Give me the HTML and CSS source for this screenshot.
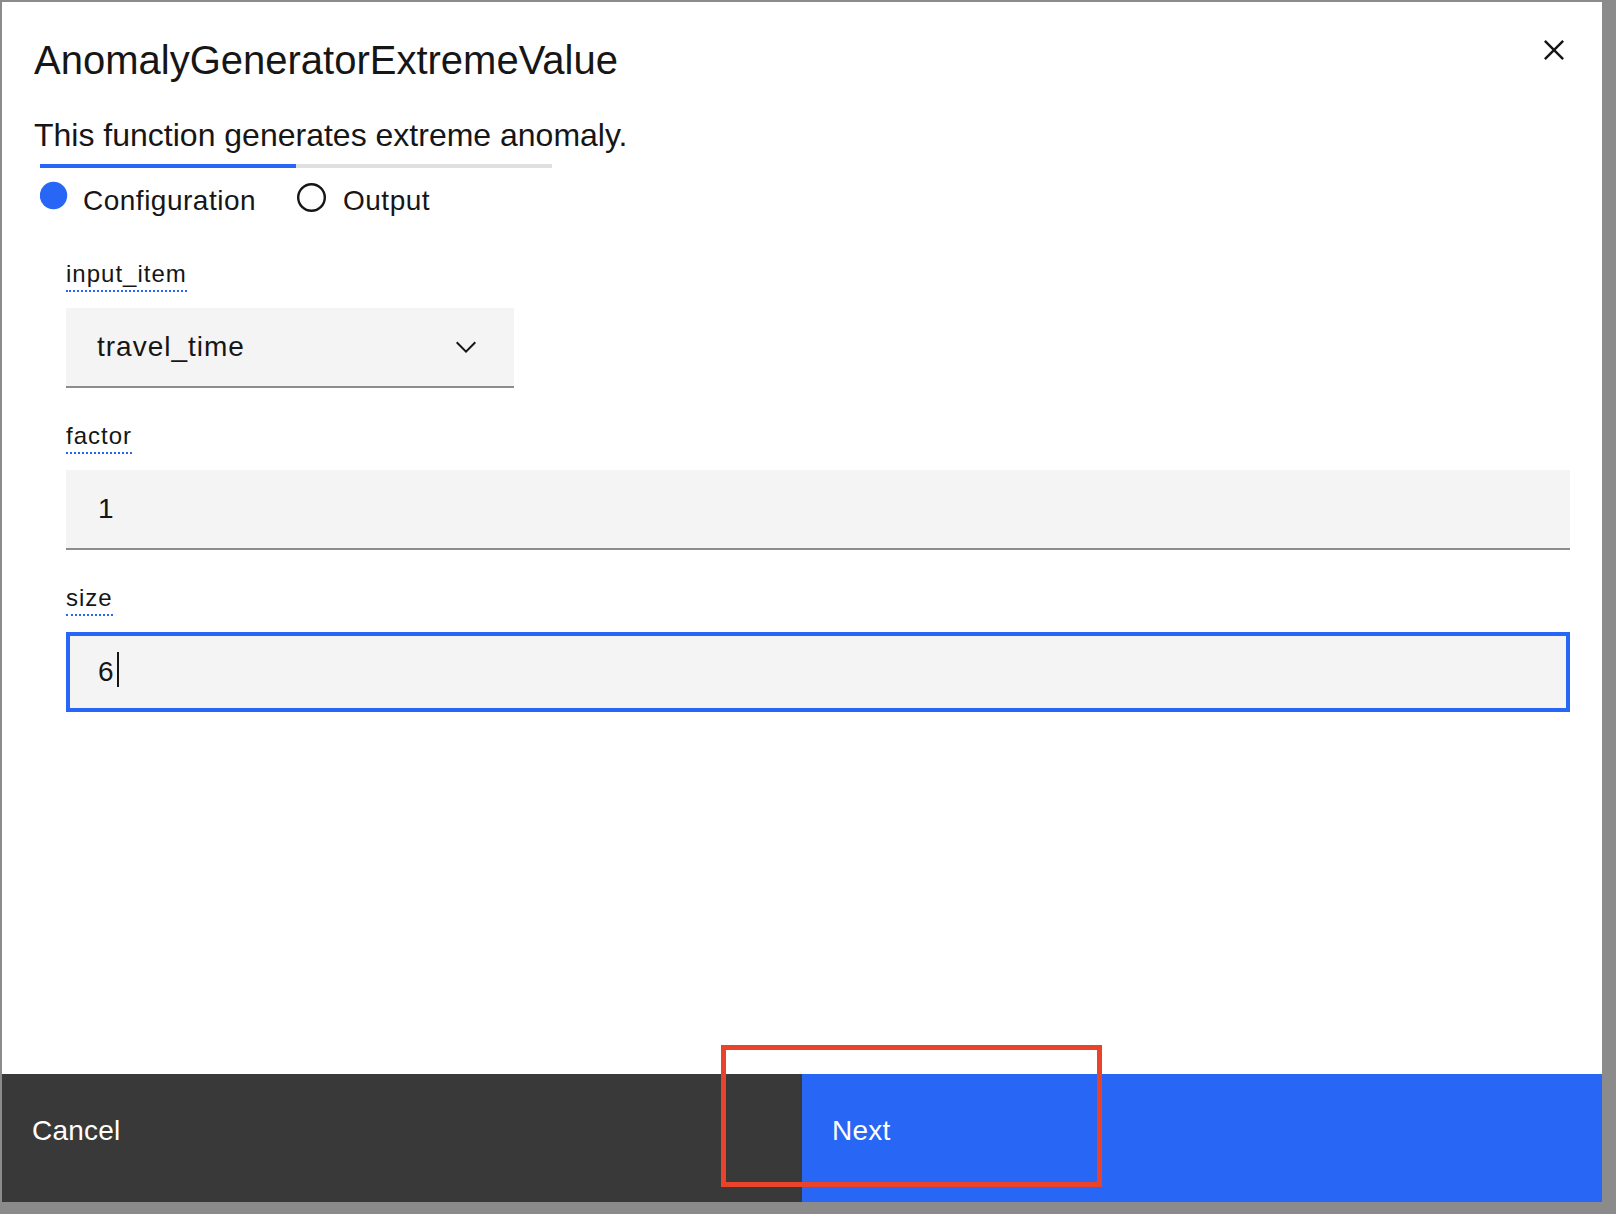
FILE: index.html
```html
<!DOCTYPE html>
<html lang="en">
<head>
<meta charset="utf-8">
<title>AnomalyGeneratorExtremeValue</title>
<link rel="stylesheet" href="styles.css">
</head>
<body>
  <div class="modal">
    <header class="modal-header">
      <div class="heading">
        <h2 class="title">AnomalyGeneratorExtremeValue</h2>
        <p class="desc">This function generates extreme anomaly.</p>
      </div>
      <button class="close" aria-label="Close">
        <svg width="40" height="40" viewBox="0 0 32 32" aria-hidden="true"><path d="M24 9.4L22.6 8 16 14.6 9.4 8 8 9.4 14.6 16 8 22.6 9.4 24 16 17.4 22.6 24 24 22.6 17.4 16 24 9.4z" fill="#161616"/></svg>
      </button>
    </header>

    <ol class="progress">
      <li class="step step-current">
        <svg class="step-icon" width="32" height="32" viewBox="0 0 32 32" aria-hidden="true"><circle cx="13.5" cy="15.5" r="13.7" fill="#2866f5"/></svg>
        <span class="step-label">Configuration</span>
      </li>
      <li class="step step-next">
        <svg class="step-icon" width="32" height="32" viewBox="0 0 32 32" aria-hidden="true"><circle cx="15.5" cy="17.5" r="13.3" fill="none" stroke="#161616" stroke-width="2.4"/></svg>
        <span class="step-label">Output</span>
      </li>
    </ol>

    <div class="form">
      <div class="field">
        <span class="field-label">input_item</span>
        <div class="select">
          <span class="value value-select">travel_time</span>
          <svg width="32" height="32" viewBox="0 0 16 16" aria-hidden="true"><path d="M8 11L3 6 3.7 5.3 8 9.6 12.3 5.3 13 6z" fill="#161616"/></svg>
        </div>
      </div>
      <div class="field">
        <span class="field-label">factor</span>
        <div class="text-input"><span class="value">1</span></div>
      </div>
      <div class="field">
        <span class="field-label">size</span>
        <div class="text-input text-input-focus"><span class="value">6</span><span class="caret"></span></div>
      </div>
    </div>

    <footer class="modal-footer">
      <button class="btn btn-secondary">Cancel</button>
      <button class="btn btn-primary">Next</button>
    </footer>
  </div>
  <div class="annotation"></div>
</body>
</html>
```

FILE: styles.css
```css
html {
  background: #8b8b8b;
}
body {
  margin: 0;
  padding: 2px 0 0 2px;
  width: 1614px;
  height: 1212px;
  position: relative;
  font-family: "Liberation Sans", Arial, sans-serif;
  color: #161616;
}
.modal {
  width: 1600px;
  height: 1200px;
  background: #ffffff;
  display: flex;
  flex-direction: column;
}
.modal-header {
  display: flex;
  padding-left: 32px;
}
.heading {
  flex: 1;
  padding-top: 34px;
}
.title {
  margin: 0;
  font-size: 40px;
  line-height: 48px;
  font-weight: 400;
}
.desc {
  margin: 31px 0 0;
  font-size: 32px;
  line-height: 40px;
}
.close {
  width: 96px;
  height: 96px;
  flex-shrink: 0;
  border: 0;
  padding: 0;
  background: transparent;
  display: flex;
  align-items: center;
  justify-content: center;
}
.progress {
  list-style: none;
  margin: 9px 0 0;
  padding: 0 0 0 38px;
  display: flex;
}
.step {
  width: 256px;
  border-top: 4px solid #e0e0e0;
  padding-top: 12px;
  display: flex;
  align-items: flex-start;
}
.step-current {
  border-top-color: #2866f5;
}
.step-icon {
  flex-shrink: 0;
  display: block;
}
.step-label {
  font-size: 28px;
  line-height: 36px;
  letter-spacing: 0.5px;
  padding-top: 3px;
  margin-left: 15px;
}
.step-current .step-label {
  margin-left: 11px;
}
.form {
  padding: 39px 32px 0 64px;
  display: flex;
  flex-direction: column;
  gap: 32px;
}
.field {
  display: flex;
  flex-direction: column;
  align-items: flex-start;
  gap: 16px;
}
.field-label {
  font-size: 24px;
  line-height: 32px;
  letter-spacing: 1px;
  border-bottom: 2px dotted #2866f5;
}
.select {
  box-sizing: border-box;
  width: 448px;
  height: 80px;
  background: #f4f4f4;
  border-bottom: 2px solid #8d8d8d;
  padding: 0 32px 0 31px;
  display: flex;
  align-items: center;
  justify-content: space-between;
}
.value {
  font-size: 28px;
  line-height: 36px;
  letter-spacing: 0.32px;
}
.value-select {
  letter-spacing: 1px;
}
.select svg {
  display: block;
}
.text-input {
  box-sizing: border-box;
  align-self: stretch;
  height: 80px;
  background: #f4f4f4;
  border-bottom: 2px solid #8d8d8d;
  padding: 0 32px;
  display: flex;
  align-items: center;
}
.text-input-focus {
  border: 4px solid #2866f5;
  padding-left: 28px;
}
.caret {
  width: 2px;
  height: 35px;
  background: #161616;
  margin-left: 3px;
  margin-bottom: 5px;
}
.modal-footer {
  margin-top: auto;
  height: 128px;
  display: flex;
}
.btn {
  flex: 1;
  border: 0;
  margin: 0;
  padding: 39px 30px 0;
  text-align: left;
  font-family: "Liberation Sans", Arial, sans-serif;
  font-size: 28px;
  line-height: 36px;
  letter-spacing: 0.2px;
  color: #ffffff;
  display: flex;
  align-items: flex-start;
}
.btn-secondary {
  background: #393939;
}
.btn-primary {
  background: #2866f5;
}
.annotation {
  position: absolute;
  left: 721px;
  top: 1045px;
  width: 381px;
  height: 142px;
  box-sizing: border-box;
  border: 5px solid #e9432b;
}
```
